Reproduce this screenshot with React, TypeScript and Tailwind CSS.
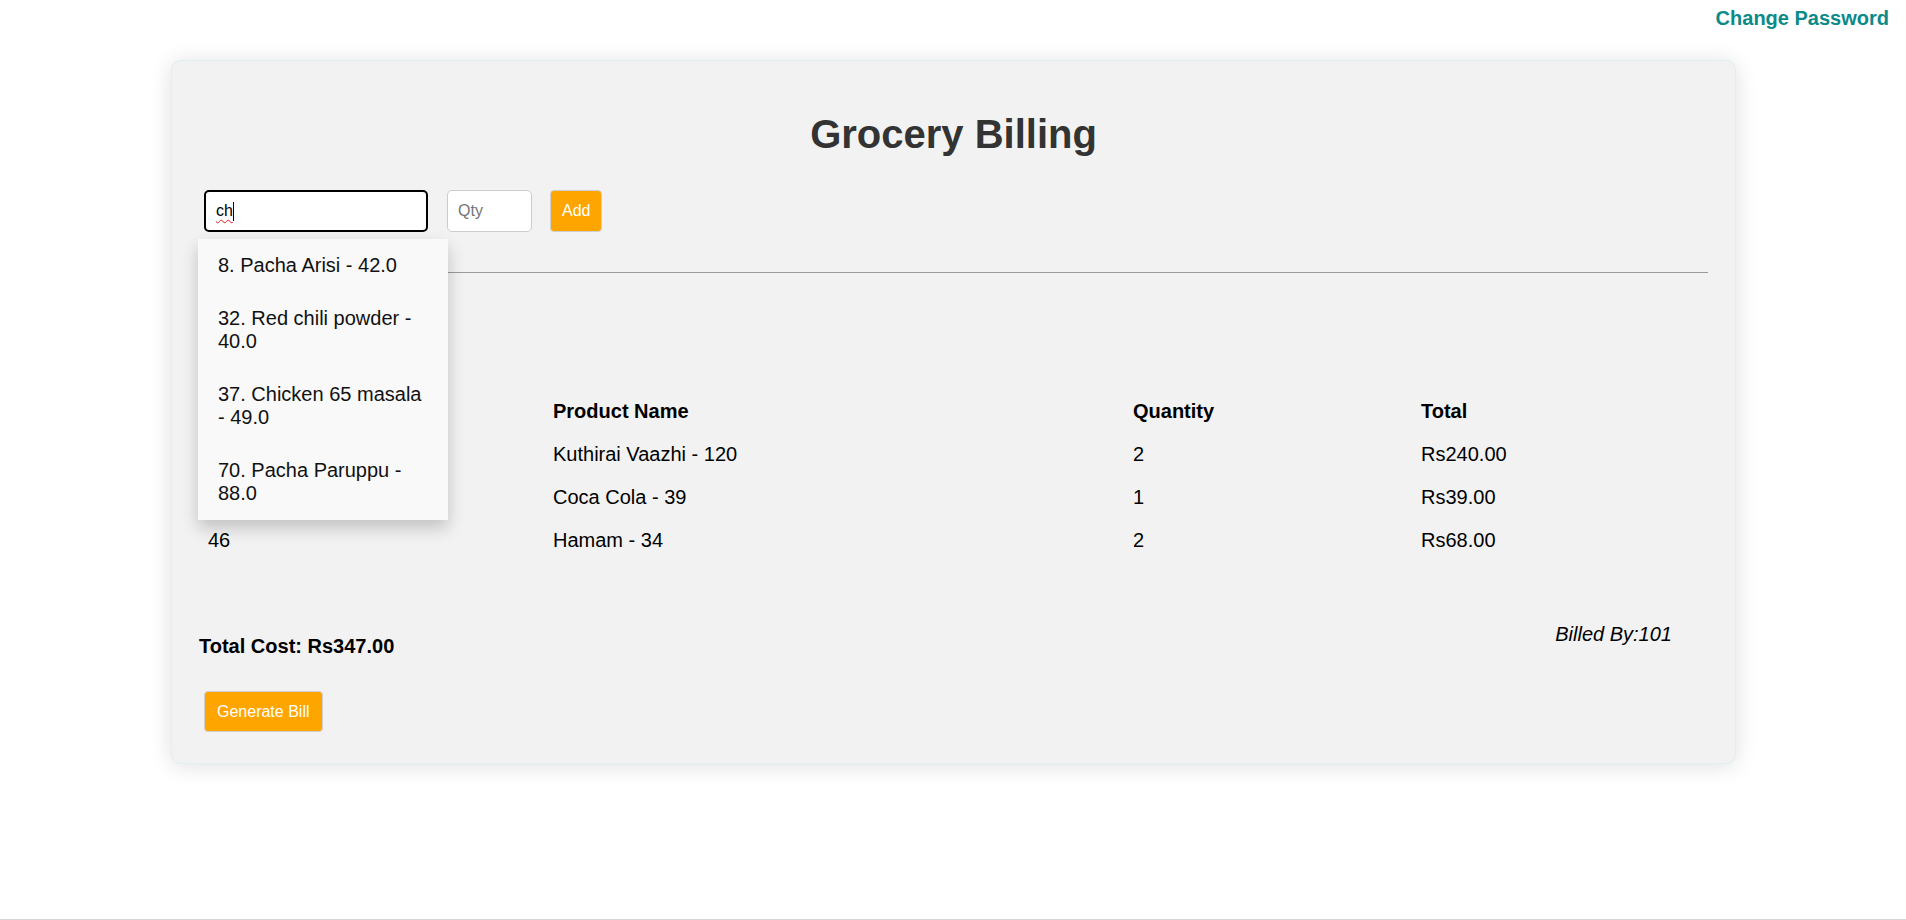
const suggestions = [
    '8. Pacha Arisi - 42.0',
    '32. Red chili powder - 40.0',
    '37. Chicken 65 masala - 49.0',
    '70. Pacha Paruppu - 88.0',
];

const billItems = [
    { id: 12, name: 'Kuthirai Vaazhi - 120', qty: 2, total: 240 },
    { id: 27, name: 'Coca Cola - 39', qty: 1, total: 39 },
    { id: 46, name: 'Hamam - 34', qty: 2, total: 68 },
];

export default function App() {
    const totalCost = billItems.reduce((sum, item) => sum + item.total, 0);

    return (
        <div className="h-[920px] bg-white border-b border-[#d4d4d4] font-['Liberation_Sans',Arial,sans-serif] text-black">
            <div className="flex justify-end pr-[17px] pt-[7px]">
                <a href="#" className="text-[20px] leading-[23px] font-bold text-[#0b8a8a]">Change Password</a>
            </div>

            <div className="ml-[171px] mt-[30px] w-[1565px] bg-[#f2f2f2] border border-[#dcf1f2] rounded-[10px] shadow-[0_2px_22px_rgba(0,0,0,0.13)] px-[27px] pt-[27px] pb-[31px]">
                <h1 className="mt-[23px] text-center text-[40px] leading-[46px] font-bold text-[#333]">Grocery Billing</h1>

                <div className="mt-[33px] flex items-center">
                    <div className="relative ml-[5px]">
                        <div className="w-[224px] h-[42px] bg-white border-2 border-black rounded-[5px] pl-[10px] flex items-center text-[16px]">
                            <span className="underline decoration-wavy decoration-[#e02020] decoration-1 underline-offset-[3px]">ch</span>
                            <span className="w-px h-[19px] bg-black"></span>
                        </div>
                        <div className="absolute left-[-6px] top-[49px] z-10 w-[250px] bg-[#f9f9f9] shadow-[0_8px_16px_rgba(0,0,0,0.2)]">
                            {suggestions.map((s) => (
                                <div key={s} className="px-5 py-[15px] text-[20px] leading-[23px] text-[#111]">{s}</div>
                            ))}
                        </div>
                    </div>
                    <input className="ml-[19px] w-[85px] h-[42px] bg-white border border-[#ccc] rounded-[5px] px-[10px] text-[16px] outline-none placeholder:text-[#757575]" type="text" placeholder="Qty" />
                    <button className="ml-[18px] h-[42px] px-[11px] bg-[#ffa500] border border-[#cfcfcf] rounded-[4px] text-white text-[16px]">Add</button>
                </div>

                <hr className="mt-[40px] border-0 border-t border-[#9a9a9a]" />

                <table className="mt-[117px] w-full table-fixed text-left text-[20px] leading-[23px]">
                    <colgroup>
                        <col className="w-[345px]" />
                        <col className="w-[580px]" />
                        <col className="w-[288px]" />
                        <col />
                    </colgroup>
                    <thead>
                        <tr>
                            <th className="px-[9px] py-[10px] font-bold">Product ID</th>
                            <th className="px-[9px] py-[10px] font-bold">Product Name</th>
                            <th className="px-[9px] py-[10px] font-bold">Quantity</th>
                            <th className="px-[9px] py-[10px] font-bold">Total</th>
                        </tr>
                    </thead>
                    <tbody>
                        {billItems.map((item) => (
                            <tr key={item.id}>
                                <td className="px-[9px] py-[10px]">{item.id}</td>
                                <td className="px-[9px] py-[10px]">{item.name}</td>
                                <td className="px-[9px] py-[10px]">{item.qty}</td>
                                <td className="px-[9px] py-[10px]">Rs{item.total.toFixed(2)}</td>
                            </tr>
                        ))}
                    </tbody>
                </table>

                <div className="flex justify-between items-start">
                    <h3 className="mt-[73px] text-[20px] leading-[23px] font-bold">Total Cost: Rs{totalCost.toFixed(2)}</h3>
                    <p className="mt-[61px] mr-[36px] text-[20px] leading-[23px] italic">Billed By:101</p>
                </div>

                <button className="mt-[33px] ml-[5px] px-[12px] py-[10px] bg-[#ffa500] border border-[#cfcfcf] rounded-[4px] text-white text-[16px] leading-[19px]">Generate Bill</button>
            </div>
        </div>
    )
}
